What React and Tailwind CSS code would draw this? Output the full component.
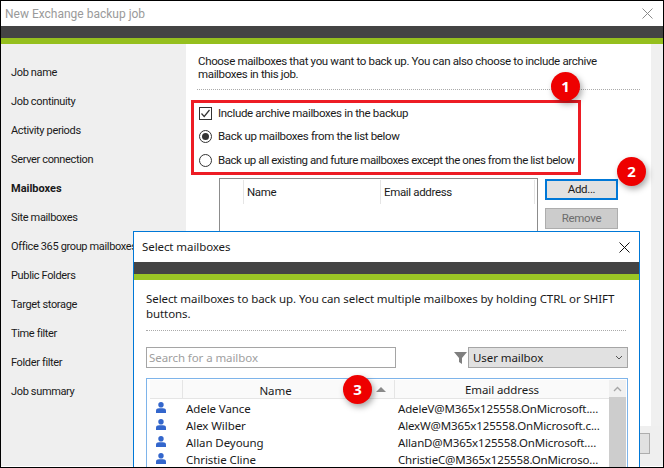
const STEPS = [
  "Job name",
  "Job continuity",
  "Activity periods",
  "Server connection",
  "Mailboxes",
  "Site mailboxes",
  "Office 365 group mailboxes",
  "Public Folders",
  "Target storage",
  "Time filter",
  "Folder filter",
  "Job summary",
];

const ROWS = [
  ["Adele Vance", "AdeleV@M365x125558.OnMicrosoft...."],
  ["Alex Wilber", "AlexW@M365x125558.OnMicrosoft.c..."],
  ["Allan Deyoung", "AllanD@M365x125558.OnMicrosoft...."],
  ["Christie Cline", "ChristieC@M365x125558.OnMicroso..."],
];

function Badge({ n, className }) {
  return (
    <div
      className={`absolute flex h-[29px] w-[29px] items-center justify-center rounded-full bg-[#ee0000] font-['Noto_Sans',sans-serif] text-[15px] font-bold tracking-normal text-white shadow-[2px_3px_6px_rgba(0,0,0,0.35)] ${className}`}
    >
      {n}
    </div>
  );
}

function Person() {
  return (
    <svg className="block" width="10" height="11" viewBox="0 0 10 11" fill="#3366cc">
      <ellipse cx="5" cy="2.8" rx="2.7" ry="2.8" />
      <path d="M0 11V8.6C0 7 1.5 6.2 3 6.2H7C8.5 6.2 10 7 10 8.6V11Z" />
    </svg>
  );
}

function CloseIcon({ color }) {
  return (
    <svg className="block" width="11" height="11" viewBox="0 0 11 11" fill="none" stroke={color} strokeWidth="1">
      <path d="M0.5 0.5L10.5 10.5M10.5 0.5L0.5 10.5" />
    </svg>
  );
}

export default function App() {
  return (
    <div className="relative h-[468px] w-[664px] overflow-hidden border border-black bg-white font-['Roboto',sans-serif] text-[11.5px] tracking-[-0.34px] text-[#1a1a1a]">
      {/* back window */}
      <div className="flex h-[25px] items-center justify-between pl-[4px] pr-[10px] text-[12px] tracking-normal text-[#9a9a9a]">
        <span>New Exchange backup job</span>
        <CloseIcon color="#8a8a8a" />
      </div>
      <div className="h-[12px] bg-[#444444]" />
      <div className="h-[6px] bg-[#95bf1e]" />

      <div className="flex h-[382px]">
        <div className="w-[185px] shrink-0 bg-[#efefef] pl-[10px] pt-[14px] text-[11px] tracking-[-0.35px]">
          {STEPS.map((s) => (
            <div key={s} className={`h-[29px] whitespace-nowrap leading-[29px] ${s === "Mailboxes" ? "font-bold tracking-normal" : ""}`}>
              {s}
            </div>
          ))}
        </div>

        <div className="w-[465px] shrink-0 pl-[12px] pt-[11px]">
          <p className="w-[410px] leading-[13px]">
            Choose mailboxes that you want to back up. You can also choose to include archive mailboxes in this job.
          </p>
          <div className="ml-[-1px] mt-[8px] w-[443px] border-t border-dotted border-[#aaaaaa]" />

          <div className="ml-[-7px] mt-[10px] flex h-[75px] w-[390px] flex-col border-[3px] border-[#ed1c24] pl-[5px]">
            <label className="flex h-[21px] items-center gap-[6px]">
              <span className="flex h-[13px] w-[13px] items-center justify-center border border-[#333333]">
                <svg width="11" height="11" viewBox="0 0 11 11" fill="none" stroke="#333333" strokeWidth="1.2">
                  <path d="M1.5 5.5L4.2 8.5L9.5 2" />
                </svg>
              </span>
              Include archive mailboxes in the backup
            </label>
            <label className="flex h-[25px] items-center gap-[6px]">
              <span className="flex h-[13px] w-[13px] items-center justify-center rounded-full border border-[#333333]">
                <span className="h-[7px] w-[7px] rounded-full bg-[#333333]" />
              </span>
              Back up mailboxes from the list below
            </label>
            <label className="flex h-[23px] items-center gap-[6px] whitespace-nowrap tracking-[-0.44px]">
              <span className="h-[13px] w-[13px] shrink-0 rounded-full border border-[#333333]" />
              Back up all existing and future mailboxes except the ones from the list below
            </label>
          </div>

          <div className="mt-[3px] flex">
            <div className="ml-[21px] h-[200px] w-[319px] shrink-0 border border-[#8c8c8c] pt-[1px]">
              <div className="flex h-[24px] items-center">
                <div className="h-[24px] w-[24px] shrink-0 border-r border-[#e5e5e5]" />
                <div className="h-[24px] w-[137px] shrink-0 border-r border-[#e5e5e5] pl-[3px] leading-[24px]">Name</div>
                <div className="h-[24px] w-[154px] shrink-0 border-r border-[#e5e5e5] pl-[3px] leading-[24px]">Email address</div>
              </div>
            </div>
            <div className="ml-[7px] flex flex-col gap-[8px] pt-[1px]">
              <div className="flex h-[21px] w-[73px] items-center justify-center border-2 border-[#0078d7] bg-[#e1e1e1]">Add...</div>
              <div className="flex h-[21px] w-[73px] items-center justify-center border border-[#adadad] bg-[#cccccc] text-[#6d6d6d]">Remove</div>
            </div>
          </div>
        </div>

        <div className="flex-1 bg-[#f0f0f0]" />
      </div>

      <div className="flex h-[40px] justify-end bg-[#efefef] pr-[13px] pt-[7px]">
        <div className="h-[21px] w-[49px] border border-[#adadad] bg-[#e1e1e1]" />
      </div>

      {/* front dialog */}
      <div className="absolute left-[132px] top-[230px] h-[240px] w-[507px] border border-[#0078d7] bg-white font-['Noto_Sans',sans-serif] tracking-[-0.08px]">
        <div className="flex h-[30px] items-center justify-between pl-[8px] pr-[9px]">
          <span>Select mailboxes</span>
          <CloseIcon color="#111111" />
        </div>
        <div className="h-[12px] bg-[#444444]" />
        <div className="h-[6px] bg-[#9bc625]" />

        <div className="pl-[12px] pr-[13px] pt-[11px]">
          <p className="w-[480px] leading-[15px]">
            Select mailboxes to back up. You can select multiple mailboxes by holding CTRL or SHIFT buttons.
          </p>
          <div className="mt-[9px] border-t border-dotted border-[#aaaaaa]" />

          <div className="mt-[16px] flex h-[21px] items-center">
            <div className="flex h-[21px] w-[250px] shrink-0 items-center border border-[#a5a5a5] pl-[2px] text-[#a0a0a0]">Search for a mailbox</div>
            <svg className="ml-[58px] shrink-0" width="13" height="12" viewBox="0 0 13 12" fill="#7f7f7f">
              <path d="M0 0H13L8 6V12L5 10V6Z" />
            </svg>
            <div className="ml-[1px] flex h-[21px] w-[160px] shrink-0 items-center justify-between border border-[#a5a5a5] bg-[#e1e1e1] px-[4px]">
              <span>User mailbox</span>
              <svg width="8" height="5" viewBox="0 0 8 5" fill="none" stroke="#555555">
                <path d="M1 1L4 4L7 1" />
              </svg>
            </div>
          </div>

          <div className="mt-[10px] h-[100px] w-[482px] border border-[#7eb4ea] pl-[3px] pt-[1px]">
            <div className="flex">
              <div className="w-[459px] shrink-0">
                <div className="flex h-[19px] items-center border-b border-[#e5e5e5] bg-[#fafafa]">
                  <div className="h-[19px] w-[33px] shrink-0 border-r border-[#e5e5e5]" />
                  <div className="relative h-[19px] w-[212px] shrink-0 border-r border-[#e5e5e5] pr-[26px] text-center leading-[21px]">
                    Name
                    <svg className="absolute right-[8px] top-[7px]" width="10" height="5" viewBox="0 0 10 5" fill="#8a8a8a">
                      <path d="M5 0L10 5H0Z" />
                    </svg>
                  </div>
                  <div className="flex-1 pt-[1px] text-center leading-[19px]">Email address</div>
                </div>
                {ROWS.map(([name, email]) => (
                  <div key={name} className="flex h-[17px] items-center">
                    <div className="w-[33px] shrink-0 pl-[6px]">
                      <Person />
                    </div>
                    <div className="w-[212px] shrink-0 pl-[3px] pt-[2px]">{name}</div>
                    <div className="whitespace-nowrap pl-[3px] pt-[2px] tracking-[-0.15px]">{email}</div>
                  </div>
                ))}
              </div>
              <div className="h-[100px] w-[17px] shrink-0 bg-[#cdcdcd]">
                <div className="flex h-[17px] items-center justify-center bg-[#f0f0f0]">
                  <svg width="9" height="6" viewBox="0 0 9 6" fill="none" stroke="#a6a6a6" strokeWidth="1.3">
                    <path d="M1 5L4.5 1.5L8 5" />
                  </svg>
                </div>
              </div>
            </div>
          </div>
        </div>
      </div>

      <Badge n="1" className="left-[550px] top-[71px]" />
      <Badge n="2" className="left-[616px] top-[156px]" />
      <Badge n="3" className="left-[342px] top-[374px]" />
    </div>
  );
}
